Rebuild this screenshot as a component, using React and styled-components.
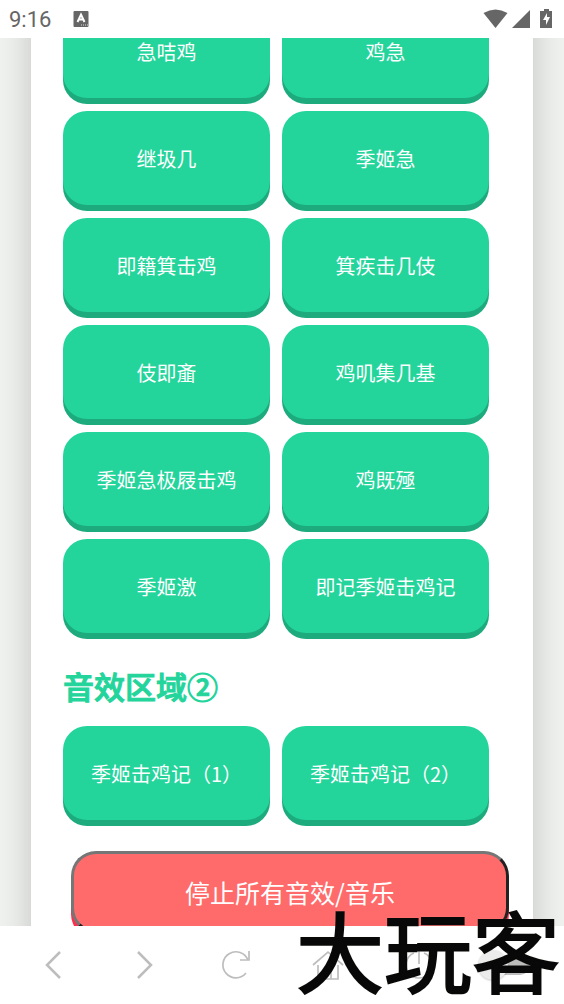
import styled, { createGlobalStyle } from 'styled-components'

const GlobalStyle = createGlobalStyle`
  * {
    box-sizing: border-box;
  }

  body {
    margin: 0;
    background-color: #fff;
    font-family: 'Noto Sans CJK SC', 'Noto Sans', sans-serif;
  }
`;

const Screen = styled.div`
  display: flex;
  flex-direction: column;
  height: 100vh;
  overflow: hidden;
`;

const StatusBar = styled.header`
  display: flex;
  flex: none;
  align-items: center;
  height: 38px;
  padding: 0 9px;
  background-color: #fff;
  color: #666;
  font-family: Roboto, sans-serif;
  font-size: 22px;

  svg {
    display: block;
  }
`;

const StatusIcons = styled.div`
  display: flex;
  align-items: center;
  gap: 4px;
  margin-left: auto;
`;

const Clock = styled.time`
  margin-right: 22px;
`;

const Viewport = styled.main`
  flex: 1;
  min-height: 0;
  overflow: hidden;
  padding: 0 31px;
  background-color: #f0f2ef;
`;

const Sheet = styled.div`
  margin-top: -34px;
  padding: 0 32px 60px;
  background-color: #fff;
  box-shadow: 0 0 32px rgba(0, 0, 0, 0.2);
`;

const SoundGrid = styled.div`
  display: grid;
  grid-template-columns: 1fr 1fr;
  gap: 7px 12px;
  padding-right: 12px;
`;

const SoundButton = styled.button`
  height: 94px;
  margin: 0 0 6px;
  padding: 0;
  border: none;
  border-radius: 24px;
  background-color: #23d49b;
  box-shadow: 0 6px 0 #1daa7d;
  color: #fff;
  font-family: inherit;
  font-size: 20px;
  cursor: pointer;
`;

const SectionTitle = styled.h2`
  margin: 23px 0 16px;
  color: #23d49b;
  font-size: 31px;
  font-weight: 500;
  line-height: 48px;
  -webkit-text-stroke: 1px #23d49b;
`;

const StopButton = styled.button`
  display: block;
  width: 100%;
  height: 82px;
  margin: 25px 0 0 8px;
  padding: 0;
  border: 3px solid;
  border-color: #767676 #212121 #212121 #767676;
  border-radius: 25px;
  background-color: #ff6b6b;
  box-shadow: 0 6px 0 #ff2e4c;
  color: #fff;
  font-family: inherit;
  font-size: 25px;
  cursor: pointer;
`;

const BrowserBar = styled.nav`
  position: relative;
  display: grid;
  flex: none;
  grid-template-columns: repeat(6, 1fr);
  align-items: center;
  height: 78px;
  padding: 0 8px;
  background-color: #fff;
`;

const NavButton = styled.button`
  display: flex;
  justify-content: center;
  padding: 0;
  border: none;
  background: none;
  color: #bdbdbd;
  cursor: pointer;
`;

const Switch = styled.input`
  position: relative;
  justify-self: center;
  width: 48px;
  height: 20px;
  margin: 0 8px 0 0;
  border-radius: 10px;
  background-color: #bdbdbd;
  appearance: none;

  &::before {
    content: '';
    position: absolute;
    top: -5px;
    left: -4px;
    width: 30px;
    height: 30px;
    border-radius: 50%;
    background-color: #ececec;
    box-shadow: 0 1px 2px rgba(0, 0, 0, 0.2);
  }
`;

const Watermark = styled.span`
  position: absolute;
  right: 4px;
  bottom: 12px;
  color: #080808;
  font-size: 88px;
  font-weight: 400;
  line-height: 88px;
  white-space: nowrap;
  -webkit-text-stroke: 2px #080808;
  text-shadow: 0 0 2px #d8d4b8;
  pointer-events: none;
`;

const sounds = [
  '急咭鸡', '鸡急',
  '继圾几', '季姬急',
  '即籍箕击鸡', '箕疾击几伎',
  '伎即齑', '鸡叽集几基',
  '季姬急极屐击鸡', '鸡既殛',
  '季姬激', '即记季姬击鸡记',
]

const sounds2 = ['季姬击鸡记（1）', '季姬击鸡记（2）']

function Icon({ children, stroke = 2 }) {
  return (
    <svg width="32" height="32" viewBox="0 0 32 32" fill="none" stroke="currentColor" strokeWidth={stroke}>
      {children}
    </svg>
  )
}

function Sounds({ items }) {
  return (
    <SoundGrid>
      {items.map((name) => (
        <SoundButton key={name} type="button">{name}</SoundButton>
      ))}
    </SoundGrid>
  )
}

export default function App(){
  return (
    <Screen>
      <GlobalStyle />
      <StatusBar>
        <Clock>9:16</Clock>
        <svg width="16" height="18" viewBox="0 0 16 18">
          <rect x="0.500" y="1" width="15" height="16" rx="1" fill="#666" />
          <path d="M4.500 12 8 4.500 11.500 12M6 9.500h4" fill="none" stroke="#fff" strokeWidth="2" />
          <path d="M8 15h7" stroke="#ddd" strokeDasharray="1 1" />
        </svg>
        <StatusIcons>
          <svg width="25" height="20" viewBox="0 0 25 20" fill="#666">
            <path d="M0.500 4Q12.500-3 24.500 4L12.500 19Z" />
          </svg>
          <svg width="19" height="20" viewBox="0 0 19 20" fill="#666">
            <path d="M0 19 18 1V19Z" />
          </svg>
          <svg width="20" height="20" viewBox="0 0 20 20">
            <path d="M9 2V0h5v2h3v17H5V2Z" fill="#666" />
            <path d="M12 4 8 11h3v5l4-8h-3Z" fill="#fff" />
          </svg>
        </StatusIcons>
      </StatusBar>

      <Viewport>
        <Sheet>
          <Sounds items={sounds} />
          <SectionTitle>音效区域②</SectionTitle>
          <Sounds items={sounds2} />
          <StopButton type="button">停止所有音效/音乐</StopButton>
        </Sheet>
      </Viewport>

      <BrowserBar>
        <NavButton type="button" aria-label="Back">
          <Icon stroke={2.5}><path d="M22 3 9 16l13 13" /></Icon>
        </NavButton>
        <NavButton type="button" aria-label="Forward">
          <Icon stroke={2.5}><path d="M9 3l13 13L9 29" /></Icon>
        </NavButton>
        <NavButton type="button" aria-label="Reload">
          <Icon stroke={1.7}>
            <path d="M26 24A13 13 0 1 1 28 11" />
            <path d="M29 2v9h-9" />
          </Icon>
        </NavButton>
        <NavButton type="button" aria-label="Home">
          <Icon stroke={1.7}><path d="M1 16 16 3l15 13M6 16v14h20V16M13 30V20h6v10" /></Icon>
        </NavButton>
        <NavButton type="button" aria-label="Exit">
          <Icon stroke={1.7}><path d="M11 4a13 13 0 1 0 10 0M16 2v13" /></Icon>
        </NavButton>
        <Switch type="checkbox" role="switch" aria-label="Mode" />
        <Watermark>大玩客</Watermark>
      </BrowserBar>
    </Screen>
  )
}
